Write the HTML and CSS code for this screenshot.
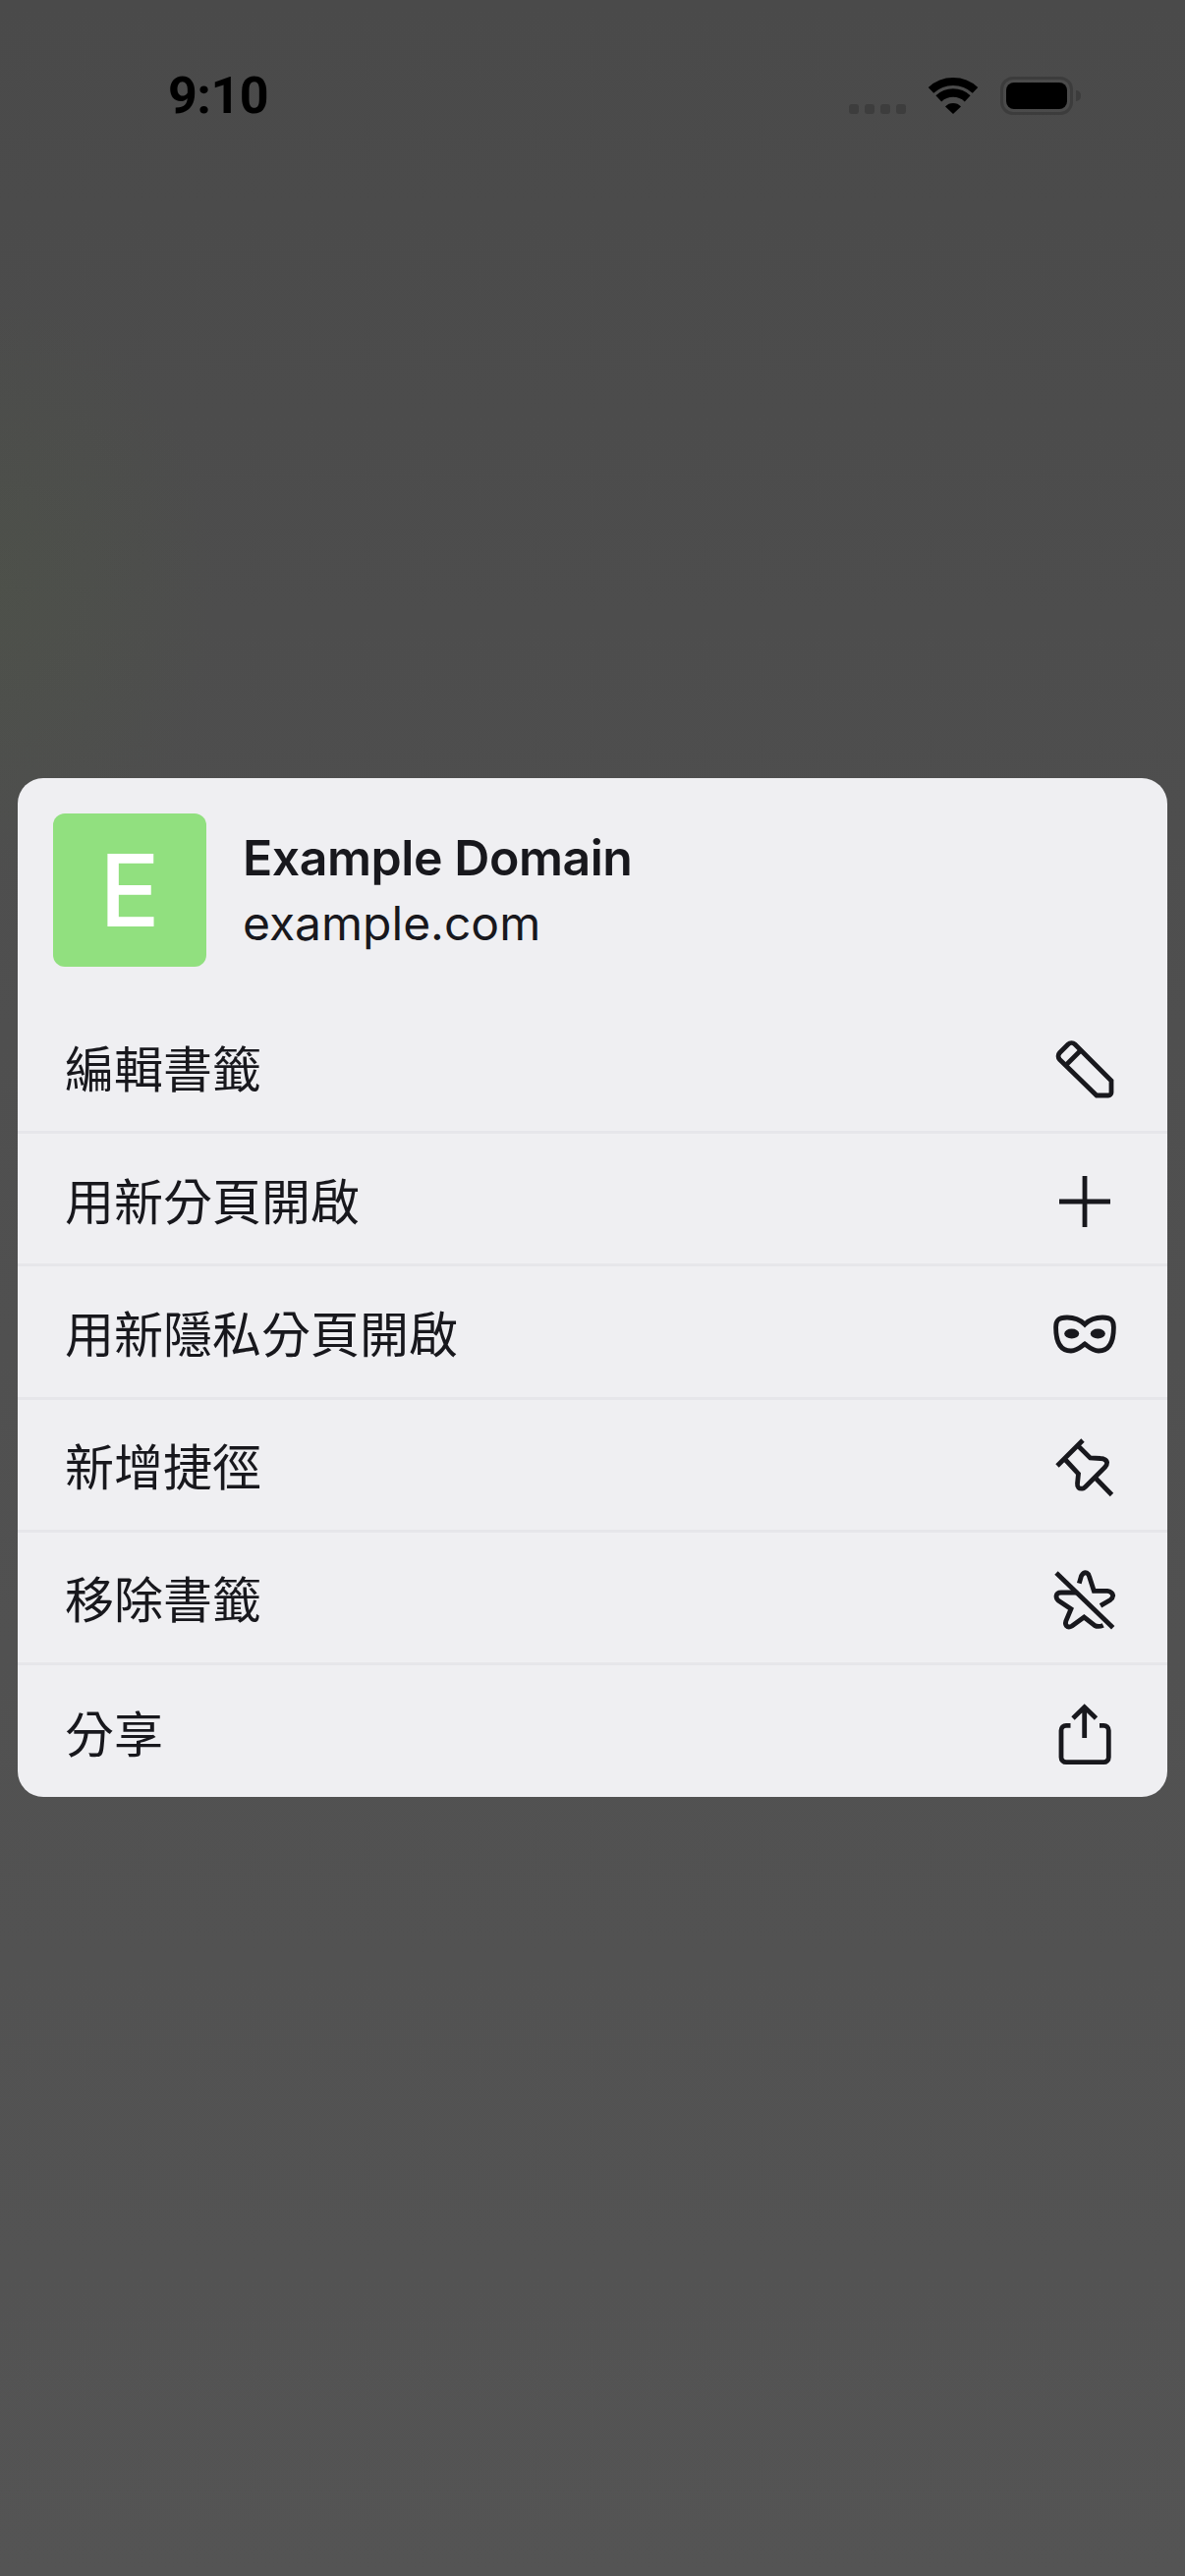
FILE: index.html
```html
<!DOCTYPE html>
<html lang="zh-Hant">
<head>
    <meta charset="UTF-8">
    <meta name="viewport" content="width=device-width, initial-scale=1.0">
    <title>Bookmark Menu</title>
    <link rel="stylesheet" href="styles.css">
</head>
<body>
    <div class="status-bar">
        <span class="clock">9:10</span>
        <div class="status-icons">
            <div class="signal"><i></i><i></i><i></i><i></i></div>
            <svg class="wifi" viewBox="0 0 52 38">
                <path class="wifi-arc arc-large" d="M3.5 13.9A33 33 0 0 1 48.5 13.9"/>
                <path class="wifi-arc arc-small" d="M11.3 22.3A21.5 21.5 0 0 1 40.7 22.3"/>
                <path class="wifi-dot" d="M26 38L18 30.5A11 11 0 0 1 34 30.5Z"/>
            </svg>
            <div class="battery"><div class="battery-level"></div></div>
            <div class="battery-cap"></div>
        </div>
    </div>

    <div class="sheet">
        <div class="sheet-header">
            <div class="favicon">E</div>
            <div class="site-info">
                <div class="site-title">Example Domain</div>
                <div class="site-url">example.com</div>
            </div>
        </div>

        <div class="menu-row">
            <span>編輯書籤</span>
            <svg class="menu-icon" viewBox="0 0 70 70">
                <path d="M62 47V59a3 3 0 0 1-3 3H47L9.5 25.5a5 5 0 0 1 0-7L18 10a5 5 0 0 1 7 0Z"/>
                <path d="M16 31L31 16"/>
            </svg>
        </div>
        <div class="menu-row">
            <span>用新分頁開啟</span>
            <svg class="menu-icon" viewBox="0 0 70 70">
                <path d="M9 35H61M35 9V61"/>
            </svg>
        </div>
        <div class="menu-row">
            <span>用新隱私分頁開啟</span>
            <svg class="menu-icon" viewBox="0 0 70 70">
                <path d="M35 25C31 21 26 18 17 18C8 18 5.6 21 5.6 28C5.6 44 11 52 21 52C27 52 31 48 35 45C39 48 43 52 49 52C59 52 64.4 44 64.4 28C64.4 21 62 18 53 18C44 18 39 21 35 25Z"/>
                <ellipse class="icon-fill" cx="21.7" cy="34.5" rx="7.5" ry="5"/>
                <ellipse class="icon-fill" cx="48.3" cy="34.5" rx="7.5" ry="5"/>
            </svg>
        </div>
        <div class="menu-row">
            <span>新增捷徑</span>
            <svg class="menu-icon" viewBox="0 0 70 70">
                <path d="M7 34L33 8M14.5 27L28.5 42L27.5 52Q27 58 33 57Q34 57 36 55L55.5 35.5Q60 30 55 27.5Q54 26.5 51 26.5L40.5 26L27 12.5M46 46.5L62.5 63.5"/>
            </svg>
        </div>
        <div class="menu-row">
            <span>移除書籤</span>
            <svg class="menu-icon" viewBox="0 0 70 70">
                <path d="M6 8L63.7 63.7"/>
                <path d="M29.3 18.7L31.5 11Q34 7 37 8Q39 9 39.7 12L44.3 26.3H58Q63 27 63.7 31Q63.5 33.5 61 35.5L51 41.3"/>
                <path d="M26 28H11Q6.5 28 6 31.5Q6 34.5 8.3 36.3L21 44.7L15.8 57Q14.5 61 17.5 62.8Q19.5 63.5 22 62L34.3 53L45 61.5Q49 63.5 53.7 61.3"/>
            </svg>
        </div>
        <div class="menu-row">
            <span>分享</span>
            <svg class="menu-icon" viewBox="0 0 70 70">
                <path d="M23 19L34.7 7.5L46.5 19M34.7 8V39"/>
                <path d="M20.5 26.3H16a5 5 0 0 0-5 5V58.7a5 5 0 0 0 5 5H54.3a5 5 0 0 0 5-5V31.3a5 5 0 0 0-5-5H50"/>
            </svg>
        </div>
    </div>
</body>
</html>
```

FILE: styles.css
```css
body {
    margin: 0;
    height: 2622px;
    overflow: hidden;
    font-family: Inter, "Noto Sans CJK TC", sans-serif;
    color: #18181d;
    background-color: #4f4f4f;
    background-image:
        radial-gradient(ellipse 220px 300px at 0 600px, rgba(80, 100, 60, 0.16), rgba(80, 100, 60, 0)),
        linear-gradient(#4a4a4a, #4f4f4f 40%, #545454);
}
.status-bar {
    display: flex;
    justify-content: space-between;
    align-items: center;
    height: 78px;
    padding: 58px 106px 0 171px;
}
.clock {
    font-family: Roboto, sans-serif;
    font-size: 52px;
    font-weight: 700;
    letter-spacing: -0.5px;
    color: #000;
}
.status-icons {
    display: flex;
    align-items: center;
}
.signal {
    display: flex;
    align-self: flex-end;
    gap: 6px;
    margin: 0 22px 1px 0;
}
.signal i {
    width: 10px;
    height: 10px;
    border-radius: 3px;
    background-color: #3d3d3d;
}
.wifi {
    width: 52px;
    height: 38px;
    margin-right: 22px;
}
.wifi-arc {
    fill: none;
    stroke: #000;
}
.arc-large {
    stroke-width: 8;
}
.arc-small {
    stroke-width: 8.5;
}
.wifi-dot {
    fill: #000;
}
.battery {
    box-sizing: border-box;
    width: 74px;
    height: 39px;
    padding: 3px;
    border: 3px solid #3c3c3c;
    border-radius: 13px;
}
.battery-level {
    height: 100%;
    border-radius: 8px;
    background-color: #000;
}
.battery-cap {
    width: 5px;
    height: 11px;
    margin-left: 3px;
    border-radius: 0 6px 6px 0;
    background-color: #3c3c3c;
}
.sheet {
    margin: 656px 18px 0;
    border-radius: 26px;
    background-color: #efeff2;
    overflow: hidden;
}
.sheet-header {
    display: flex;
    align-items: center;
    gap: 37px;
    padding: 36px 36px 35px;
}
.favicon {
    display: flex;
    align-items: center;
    justify-content: center;
    width: 156px;
    height: 156px;
    border-radius: 12px;
    background-color: #91e07f;
    color: #fff;
    font-size: 102px;
    font-weight: 500;
}
.site-title {
    font-size: 50px;
    font-weight: 600;
    line-height: 68px;
    letter-spacing: -0.45px;
}
.site-url {
    font-size: 48px;
    line-height: 66px;
}
.menu-row {
    display: flex;
    align-items: center;
    justify-content: space-between;
    box-sizing: border-box;
    height: 135.2px;
    padding: 5px 49px 0 48px;
    border-bottom: 3px solid #e6e6ea;
    font-size: 50px;
}
.menu-row span {
    margin-bottom: 6px;
}
.menu-row:last-child {
    height: 134.4px;
    border-bottom: none;
}
.menu-icon {
    width: 70px;
    height: 70px;
    fill: none;
    stroke: #18181d;
    stroke-width: 4.8;
}
.menu-icon .icon-fill {
    fill: #18181d;
    stroke: none;
}
```
